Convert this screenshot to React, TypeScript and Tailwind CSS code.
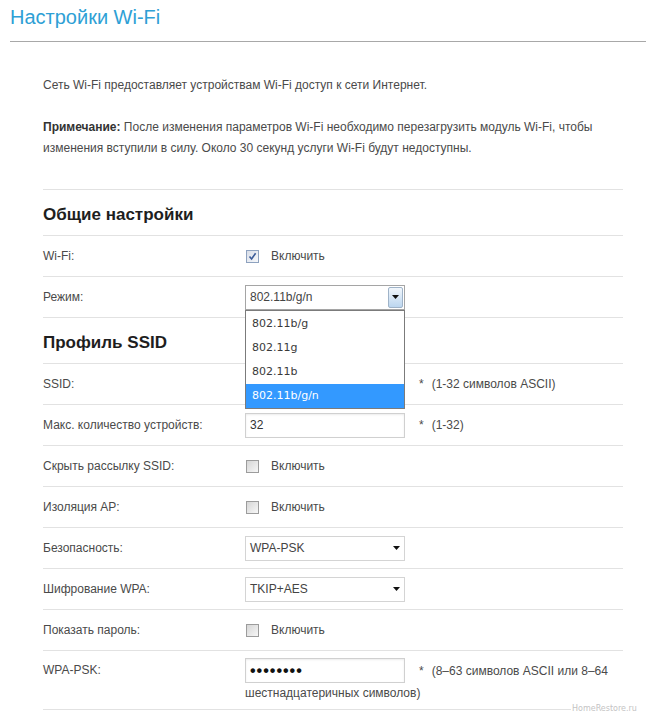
import React from "react";

const Arrow = () => (
  <svg width="7" height="4" viewBox="0 0 7 4">
    <path d="M0 0H7L3.5 4Z" fill="#111" />
  </svg>
);

function Box({ checked }: { checked?: boolean }) {
  return (
    <span
      className={
        checked
          ? "w-[13px] h-[13px] border border-[#8ea2bf] bg-linear-to-br from-[#d9dee8] to-[#f6f8fb] flex items-center justify-center"
          : "w-[13px] h-[13px] border border-[#9c9c9c] bg-linear-to-br from-[#d6d6d6] to-[#f7f7f7] flex items-center justify-center"
      }
    >
      {checked && (
        <svg width="9" height="9" viewBox="0 0 9 9">
          <path d="M1.5 4.5L3.6 7L7.6 1.2" stroke="#3a5b98" strokeWidth="1.6" fill="none" />
        </svg>
      )}
    </span>
  );
}

function Enable({ checked }: { checked?: boolean }) {
  return (
    <div className="flex items-center pl-[1px]">
      <Box checked={checked} />
      <span className="ml-[12px]">Включить</span>
    </div>
  );
}

function Row({
  label,
  children,
  tall,
}: {
  label: string;
  children?: React.ReactNode;
  tall?: boolean;
}) {
  return (
    <div
      className={
        tall
          ? "flex items-start border-b border-[#e2e2e2] h-[59px] pt-[7px]"
          : "flex items-center border-b border-[#e2e2e2] h-[41px]"
      }
    >
      <div className={tall ? "w-[202px] shrink-0 leading-[25px]" : "w-[202px] shrink-0"}>{label}</div>
      <div className="flex-1">{children}</div>
    </div>
  );
}

function Input({ children }: { children?: React.ReactNode }) {
  return (
    <div className="w-[160px] h-[25px] border border-[#d0d0d0] shadow-[inset_0_1px_2px_rgba(0,0,0,0.08)] bg-white flex items-center pl-[4px] text-[#333]">
      {children}
    </div>
  );
}

function Select({ value }: { value: string }) {
  return (
    <div className="w-[160px] h-[25px] border border-[#d4d4d4] bg-white flex items-center justify-between pl-[4px] pr-[4px] text-[#444]">
      <span>{value}</span>
      <Arrow />
    </div>
  );
}

function Hint({ children }: { children: React.ReactNode }) {
  return (
    <span className="ml-[14px] flex">
      <span>*</span>
      <span className="ml-[8px]">{children}</span>
    </span>
  );
}

function Heading({ children }: { children: React.ReactNode }) {
  return (
    <div className="h-[46px] border-b border-[#e2e2e2] flex items-center pt-[5px]">
      <h2 className="text-[17px] font-bold text-[#1e1e1e]">{children}</h2>
    </div>
  );
}

export default function App() {
  const options = ["802.11b/g", "802.11g", "802.11b", "802.11b/g/n"];
  return (
    <div className="relative w-[646px] h-[725px] bg-white overflow-hidden font-['Liberation_Sans',Arial,sans-serif] text-[12px] text-[#4a4a4a]">
      <div className="ml-[10px] h-[42px] border-b border-[#a8a8a8]">
        <h1 className="text-[20px] leading-[34px] text-[#2ea0d5]">Настройки Wi-Fi</h1>
      </div>
      <div className="ml-[43px] w-[580px]">
        <div className="pt-[33px] pb-[30px] border-b border-[#e2e2e2] leading-[21px]">
          <p className="whitespace-nowrap">
            Сеть Wi-Fi предоставляет устройствам Wi-Fi доступ к сети Интернет.
          </p>
          <p className="mt-[21px] whitespace-nowrap">
            <b className="text-[#333]">Примечание:</b> После изменения параметров Wi-Fi необходимо
            перезагрузить модуль Wi-Fi, чтобы
            <br />
            изменения вступили в силу. Около 30 секунд услуги Wi-Fi будут недоступны.
          </p>
        </div>

        <Heading>Общие настройки</Heading>
        <Row label="Wi-Fi:">
          <Enable checked />
        </Row>
        <Row label="Режим:">
          <div className="relative w-[160px] h-[25px] border border-[#a5a5a5] bg-white flex items-center pl-[4px] text-[#444]">
            <span>802.11b/g/n</span>
            <div className="absolute right-[1px] top-[1px] bottom-[1px] w-[15px] border border-[#9fb3c8] rounded-[2px] bg-linear-to-b from-[#f2f7fc] to-[#bcd6ef] flex items-center justify-center">
              <Arrow />
            </div>
            <div className="absolute left-[-1px] top-[24px] w-[160px] border border-[#7b7b7b] bg-white z-10 pt-[1px] font-['DejaVu_Sans',sans-serif] text-[11px] text-[#3a3a3a]">
              {options.map((o, i) => (
                <div
                  key={o}
                  className={
                    i === 3
                      ? "h-[24px] flex items-center pl-[6px] pt-[2px] bg-[#3399ff] text-white"
                      : "h-[24px] flex items-center pl-[6px] pt-[2px]"
                  }
                >
                  {o}
                </div>
              ))}
            </div>
          </div>
        </Row>

        <Heading>Профиль SSID</Heading>
        <Row label="SSID:">
          <div className="flex items-center">
            <Input />
            <Hint>(1-32 символов ASCII)</Hint>
          </div>
        </Row>
        <Row label="Макс. количество устройств:">
          <div className="flex items-center">
            <Input>32</Input>
            <Hint>(1-32)</Hint>
          </div>
        </Row>
        <Row label="Скрыть рассылку SSID:">
          <Enable />
        </Row>
        <Row label="Изоляция AP:">
          <Enable />
        </Row>
        <Row label="Безопасность:">
          <Select value="WPA-PSK" />
        </Row>
        <Row label="Шифрование WPA:">
          <Select value="TKIP+AES" />
        </Row>
        <Row label="Показать пароль:">
          <Enable />
        </Row>
        <Row label="WPA-PSK:" tall>
          <div className="flex items-center">
            <Input>
              <span className="text-[16px] leading-[16px] tracking-[1px] text-[#111] font-bold">••••••••</span>
            </Input>
            <Hint>(8–63 символов ASCII или 8–64</Hint>
          </div>
          <div className="leading-[18px] mt-[1px]">шестнадцатеричных символов)</div>
        </Row>
      </div>
      <div className="absolute left-[571px] top-[704px] bg-white px-[1px] text-[8px] leading-[10px] text-[#c4c4c4] font-['DejaVu_Sans',sans-serif]">
        HomeRestore.ru
      </div>
    </div>
  );
}
